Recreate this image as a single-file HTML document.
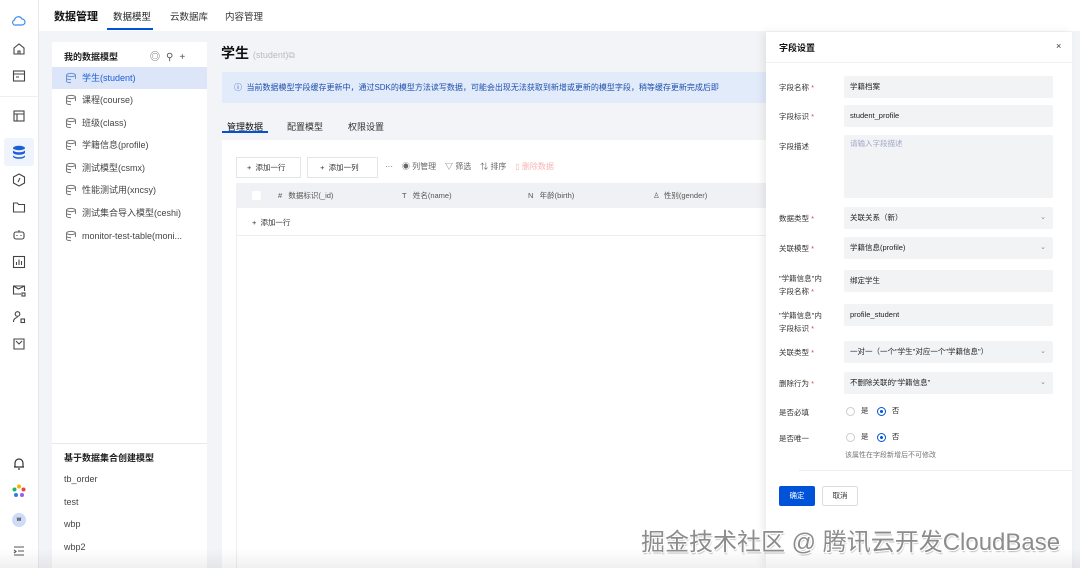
<!DOCTYPE html>
<html><head><meta charset="utf-8"><style>
*{box-sizing:border-box;margin:0;padding:0}
body{width:1080px;height:568px;overflow:hidden;background:#f3f4f7;font-family:"Liberation Sans","Noto Sans CJK SC",sans-serif;font-size:9px;color:#333;position:relative}
.abs{position:absolute}
.rail{left:0;top:0;width:39px;height:568px;background:#fff;border-right:1px solid #e6e8ec}
.ic{position:absolute;left:12px;width:14px;height:14px}
.top{left:39px;top:0;width:1041px;height:31px;background:#fff}
.panel{left:52px;top:42px;width:155px;height:526px;background:#fff}
.row{position:absolute;left:0;width:155px;height:22px;line-height:22px;padding-left:30px;font-size:9px;color:#444}
.row svg{position:absolute;left:13px;top:5px}
.main{left:222px;top:140px;width:560px;height:428px;background:#fff}
.drawer{left:766px;top:32px;width:306px;height:536px;background:#fff;box-shadow:-3px 0 8px rgba(0,0,0,.08)}
.lbl{position:absolute;left:13px;font-size:7.5px;color:#333}
.lbl i{color:#e54545;font-style:normal}
.inp{position:absolute;left:78px;width:209px;height:22px;background:#f2f3f5;border-radius:2px;font-size:7.5px;line-height:22px;padding-left:6px;color:#222}
.inp b{position:absolute;right:7px;top:0;font-weight:normal;color:#888;font-size:7px}
.btn{position:absolute;top:17px;height:21px;border:1px solid #e3e5e9;background:#fff;font-size:7.5px;line-height:19px;padding-left:10px;color:#333}
.radio{display:inline-block;width:9px;height:9px;border-radius:50%;border:1px solid #ccc;vertical-align:middle;margin-right:6px;position:relative}
.radio.on{border-color:#0052d9}
.radio.on:after{content:"";position:absolute;left:2px;top:2px;width:3px;height:3px;border-radius:50%;background:#0052d9}
</style></head><body>
<div class="abs rail">
<svg class="ic" style="top:14px" viewBox="0 0 14 14" fill="none" stroke="#3a8bf0" stroke-width="1.2"><path d="M4 11h6a3 3 0 0 0 0-6 4 4 0 0 0-7.5 1A2.5 2.5 0 0 0 4 11z"/></svg>
<svg class="ic" style="top:42px" viewBox="0 0 14 14" fill="none" stroke="#444" stroke-width="1.1"><path d="M2 6l5-4 5 4v6H2z M6 12V9h2v3"/></svg>
<svg class="ic" style="top:69px" viewBox="0 0 14 14" fill="none" stroke="#444" stroke-width="1.1"><rect x="1.5" y="2" width="11" height="10"/><path d="M1.5 5h11M4 8h3"/></svg>
<div class="abs" style="left:0;top:96px;width:38px;height:1px;background:#eee"></div>
<svg class="ic" style="top:109px" viewBox="0 0 14 14" fill="none" stroke="#444" stroke-width="1.1"><rect x="2" y="2" width="10" height="10"/><path d="M2 5h10M5 5v7"/></svg>
<div class="abs" style="left:4px;top:138px;width:30px;height:28px;background:#eef3fc;border-radius:3px"></div>
<svg class="ic" style="top:145px" viewBox="0 0 14 14" fill="#1a5fd8"><ellipse cx="7" cy="3" rx="6" ry="2.2"/><path d="M1 5c0 1.3 2.7 2.3 6 2.3S13 6.3 13 5v2.5c0 1.3-2.7 2.3-6 2.3S1 8.8 1 7.5z M1 10c0 1.3 2.7 2.3 6 2.3s6-1 6-2.3v1.5c0 1.3-2.7 2.3-6 2.3S1 12.8 1 11.5z"/></svg>
<svg class="ic" style="top:173px" viewBox="0 0 14 14" fill="none" stroke="#444" stroke-width="1.1"><path d="M7 1l5.5 3v6L7 13 1.5 10V4z M8 5L6 9"/></svg>
<svg class="ic" style="top:200px" viewBox="0 0 14 14" fill="none" stroke="#444" stroke-width="1.1"><path d="M1.5 3h4l1 1.5h6V12h-11z"/></svg>
<svg class="ic" style="top:228px" viewBox="0 0 14 14" fill="none" stroke="#444" stroke-width="1.1"><rect x="2" y="4" width="10" height="7" rx="2"/><path d="M7 4V2M5 7v1M9 7v1"/></svg>
<svg class="ic" style="top:255px" viewBox="0 0 14 14" fill="none" stroke="#444" stroke-width="1.1"><rect x="1.5" y="1.5" width="11" height="11"/><path d="M4.5 10V7M7 10V4.5M9.5 10V6"/></svg>
<svg class="ic" style="top:283px" viewBox="0 0 14 14" fill="none" stroke="#444" stroke-width="1.1"><path d="M9 11H1.5V3h11v5M1.5 3l5 3 6-3"/><rect x="10" y="10" width="3" height="3"/></svg>
<svg class="ic" style="top:310px" viewBox="0 0 14 14" fill="none" stroke="#444" stroke-width="1.1"><circle cx="5.5" cy="4" r="2.3"/><path d="M1.5 12c0-3 2-4.5 4-4.5"/><rect x="9" y="9" width="3.5" height="3.5"/></svg>
<svg class="ic" style="top:337px" viewBox="0 0 14 14" fill="none" stroke="#444" stroke-width="1.1"><path d="M2 2h10v10H2zM4 4l3 3 3-3"/></svg>
<svg class="ic" style="top:457px" viewBox="0 0 14 14" fill="none" stroke="#333" stroke-width="1.2"><path d="M3 10V6a4 4 0 0 1 8 0v4zM2 10h10M6 12h2"/></svg>
<svg class="ic" style="top:484px" viewBox="0 0 14 14"><circle cx="7" cy="2.5" r="2" fill="#f5b400"/><circle cx="11.5" cy="5.5" r="2" fill="#e8453c"/><circle cx="10" cy="11" r="2" fill="#9c5cf0"/><circle cx="4" cy="11" r="2" fill="#2f7be8"/><circle cx="2.5" cy="5.5" r="2" fill="#1fb36b"/></svg>
<div class="abs" style="left:12px;top:513px;width:14px;height:14px;border-radius:50%;background:#cfdcf6;font-size:6px;text-align:center;line-height:14px;font-weight:bold">w</div>
<svg class="ic" style="top:544px" viewBox="0 0 14 14" fill="none" stroke="#555" stroke-width="1.1"><path d="M2 3h10M6 7h6M2 11h10M2 6l2 1.5L2 9"/></svg>
</div>
<div class="abs top">
<div class="abs" style="left:15px;top:8px;font-size:11px;font-weight:bold;color:#111">数据管理</div>
<div class="abs" style="left:74px;top:9px;font-size:9.5px;color:#222">数据模型</div>
<div class="abs" style="left:68px;top:28px;width:46px;height:2px;background:#0052d9"></div>
<div class="abs" style="left:131px;top:9px;font-size:9.5px;color:#333">云数据库</div>
<div class="abs" style="left:186px;top:9px;font-size:9.5px;color:#333">内容管理</div>
</div>
<div class="abs panel">
<div class="abs" style="left:12px;top:8px;font-size:9px;font-weight:bold;color:#222">我的数据模型</div>
<div class="abs" style="left:98px;top:6px;font-size:10px;color:#555;letter-spacing:6px">◎⚲+</div>
<div class="row" style="top:25px;background:#dce6f8;color:#1a5fd8"><svg width="12" height="12" viewBox="0 0 12 12" fill="none" stroke="#6a90d8"><ellipse cx="6" cy="3" rx="4.5" ry="1.6"/><path d="M1.5 3v6c0 1 2 1.6 4.5 1.6M10.5 3v4M1.5 6c0 1 2 1.6 4.5 1.6"/></svg>学生(student)</div>
<div class="row" style="top:47px"><svg width="12" height="12" viewBox="0 0 12 12" fill="none" stroke="#777"><ellipse cx="6" cy="3" rx="4.5" ry="1.6"/><path d="M1.5 3v6c0 1 2 1.6 4.5 1.6M10.5 3v4M1.5 6c0 1 2 1.6 4.5 1.6"/></svg>课程(course)</div>
<div class="row" style="top:70px"><svg width="12" height="12" viewBox="0 0 12 12" fill="none" stroke="#777"><ellipse cx="6" cy="3" rx="4.5" ry="1.6"/><path d="M1.5 3v6c0 1 2 1.6 4.5 1.6M10.5 3v4M1.5 6c0 1 2 1.6 4.5 1.6"/></svg>班级(class)</div>
<div class="row" style="top:92px"><svg width="12" height="12" viewBox="0 0 12 12" fill="none" stroke="#777"><ellipse cx="6" cy="3" rx="4.5" ry="1.6"/><path d="M1.5 3v6c0 1 2 1.6 4.5 1.6M10.5 3v4M1.5 6c0 1 2 1.6 4.5 1.6"/></svg>学籍信息(profile)</div>
<div class="row" style="top:115px"><svg width="12" height="12" viewBox="0 0 12 12" fill="none" stroke="#777"><ellipse cx="6" cy="3" rx="4.5" ry="1.6"/><path d="M1.5 3v6c0 1 2 1.6 4.5 1.6M10.5 3v4M1.5 6c0 1 2 1.6 4.5 1.6"/></svg>测试模型(csmx)</div>
<div class="row" style="top:137px"><svg width="12" height="12" viewBox="0 0 12 12" fill="none" stroke="#777"><ellipse cx="6" cy="3" rx="4.5" ry="1.6"/><path d="M1.5 3v6c0 1 2 1.6 4.5 1.6M10.5 3v4M1.5 6c0 1 2 1.6 4.5 1.6"/></svg>性能测试用(xncsy)</div>
<div class="row" style="top:160px"><svg width="12" height="12" viewBox="0 0 12 12" fill="none" stroke="#777"><ellipse cx="6" cy="3" rx="4.5" ry="1.6"/><path d="M1.5 3v6c0 1 2 1.6 4.5 1.6M10.5 3v4M1.5 6c0 1 2 1.6 4.5 1.6"/></svg>测试集合导入模型(ceshi)</div>
<div class="row" style="top:183px"><svg width="12" height="12" viewBox="0 0 12 12" fill="none" stroke="#777"><ellipse cx="6" cy="3" rx="4.5" ry="1.6"/><path d="M1.5 3v6c0 1 2 1.6 4.5 1.6M10.5 3v4M1.5 6c0 1 2 1.6 4.5 1.6"/></svg>monitor-test-table(moni...</div>
<div class="abs" style="left:0;top:401px;width:155px;height:1px;background:#e6e8ec"></div>
<div class="abs" style="left:12px;top:409px;font-size:9px;font-weight:bold;color:#222">基于数据集合创建模型</div>
<div class="abs" style="left:12px;top:432px;font-size:9px;color:#444">tb_order</div>
<div class="abs" style="left:12px;top:455px;font-size:9px;color:#444">test</div>
<div class="abs" style="left:12px;top:477px;font-size:9px;color:#444">wbp</div>
<div class="abs" style="left:12px;top:500px;font-size:9px;color:#444">wbp2</div>
</div>
<div class="abs" style="left:221px;top:43px;font-size:14px;font-weight:bold;color:#111">学生 <span style="font-size:9px;font-weight:normal;color:#bbb">(student)⧉</span></div>
<div class="abs" style="left:222px;top:72px;width:558px;height:31px;background:#e2ebfa;font-size:8px;color:#1f4fae;line-height:31px;padding-left:12px;white-space:nowrap;overflow:hidden">ⓘ&nbsp; 当前数据模型字段缓存更新中，通过SDK的模型方法读写数据，可能会出现无法获取到新增或更新的模型字段，稍等缓存更新完成后即</div>
<div class="abs" style="left:227px;top:120px;font-size:9px;color:#111">管理数据</div>
<div class="abs" style="left:222px;top:131px;width:46px;height:2px;background:#0052d9"></div>
<div class="abs" style="left:287px;top:120px;font-size:9px;color:#333">配置模型</div>
<div class="abs" style="left:348px;top:120px;font-size:9px;color:#333">权限设置</div>
<div class="abs main">
<div class="btn" style="left:14px;width:65px">+&nbsp; 添加一行</div>
<div class="btn" style="left:85px;width:71px">&nbsp;+&nbsp; 添加一列</div>
<div class="abs" style="left:163px;top:21px;font-size:8px;color:#666">···&nbsp;&nbsp;&nbsp; ◉ 列管理 &nbsp;&nbsp;&nbsp;▽ 筛选 &nbsp;&nbsp;&nbsp;⇅ 排序 &nbsp;&nbsp;&nbsp;<span style="color:#f5b5b5">▯ 删除数据</span></div>
<div class="abs" style="left:14px;top:43px;width:546px;height:25px;background:#f0f1f4;font-size:7.5px;color:#555;line-height:25px">
<span class="abs" style="left:16px;top:8px;width:9px;height:9px;background:#fff;border-radius:2px"></span>
<span class="abs" style="left:42px">#&nbsp;&nbsp; 数据标识(_id)</span>
<span class="abs" style="left:166px">T&nbsp;&nbsp; 姓名(name)</span>
<span class="abs" style="left:292px">N&nbsp;&nbsp; 年龄(birth)</span>
<span class="abs" style="left:417px">♙&nbsp; 性别(gender)</span>
</div>
<div class="abs" style="left:14px;top:70px;width:546px;height:26px;border-bottom:1px solid #eee;font-size:7.5px;line-height:26px;padding-left:16px">+&nbsp; 添加一行</div>
<div class="abs" style="left:14px;top:68px;width:1px;height:360px;background:#eee"></div>
</div>
<div class="abs drawer">
<div class="abs" style="left:13px;top:9px;font-size:9px;font-weight:bold;color:#111">字段设置</div>
<div class="abs" style="left:290px;top:9px;font-size:9px;color:#333">×</div>
<div class="abs" style="left:0;top:30px;width:306px;height:1px;background:#f0f0f0"></div>
<div class="lbl" style="top:50px">字段名称 <i>*</i></div><div class="inp" style="top:44px">学籍档案</div>
<div class="lbl" style="top:79px">字段标识 <i>*</i></div><div class="inp" style="top:73px">student_profile</div>
<div class="lbl" style="top:109px">字段描述</div><div class="inp" style="top:103px;height:63px;color:#a0a8c8;line-height:18px">请输入字段描述</div>
<div class="lbl" style="top:181px">数据类型 <i>*</i></div><div class="inp" style="top:175px">关联关系（新）<b>⌄</b></div>
<div class="lbl" style="top:211px">关联模型 <i>*</i></div><div class="inp" style="top:205px">学籍信息(profile)<b>⌄</b></div>
<div class="lbl" style="top:240px;line-height:13px">"学籍信息"内<br>字段名称 <i>*</i></div><div class="inp" style="top:238px">绑定学生</div>
<div class="lbl" style="top:277px;line-height:13px">"学籍信息"内<br>字段标识 <i>*</i></div><div class="inp" style="top:272px">profile_student</div>
<div class="lbl" style="top:315px">关联类型 <i>*</i></div><div class="inp" style="top:309px">一对一（一个"学生"对应一个"学籍信息"）<b>⌄</b></div>
<div class="lbl" style="top:346px">删除行为 <i>*</i></div><div class="inp" style="top:340px">不删除关联的"学籍信息"<b>⌄</b></div>
<div class="lbl" style="top:375px">是否必填</div><div class="abs" style="left:80px;top:373px;font-size:7.5px"><span class="radio"></span>是&nbsp;&nbsp;&nbsp; <span class="radio on"></span>否</div>
<div class="lbl" style="top:401px">是否唯一</div><div class="abs" style="left:80px;top:399px;font-size:7.5px"><span class="radio"></span>是&nbsp;&nbsp;&nbsp; <span class="radio on"></span>否</div>
<div class="abs" style="left:79px;top:418px;font-size:7px;color:#777">该属性在字段新增后不可修改</div>
<div class="abs" style="left:33px;top:438px;width:273px;height:1px;background:#eee"></div>
<div class="abs" style="left:13px;top:454px;width:36px;height:20px;background:#0052d9;border-radius:2px;color:#fff;font-size:7.5px;text-align:center;line-height:20px">确定</div>
<div class="abs" style="left:56px;top:454px;width:36px;height:20px;border:1px solid #ddd;border-radius:2px;font-size:7.5px;text-align:center;line-height:18px">取消</div>
</div>
<div class="abs" style="left:0;top:548px;width:1080px;height:20px;background:linear-gradient(rgba(0,0,0,0),rgba(0,0,0,.06))"></div>
<div class="abs" style="left:641px;top:522px;font-size:24px;color:#8c8c8c;white-space:nowrap;text-shadow:1px 1px 0 #fff,-1px -1px 0 #fff,1px -1px 0 #fff,-1px 1px 0 #fff,1px 2px 1px rgba(0,0,0,.25)">掘金技术社区 @ 腾讯云开发CloudBase</div>
</body></html>
